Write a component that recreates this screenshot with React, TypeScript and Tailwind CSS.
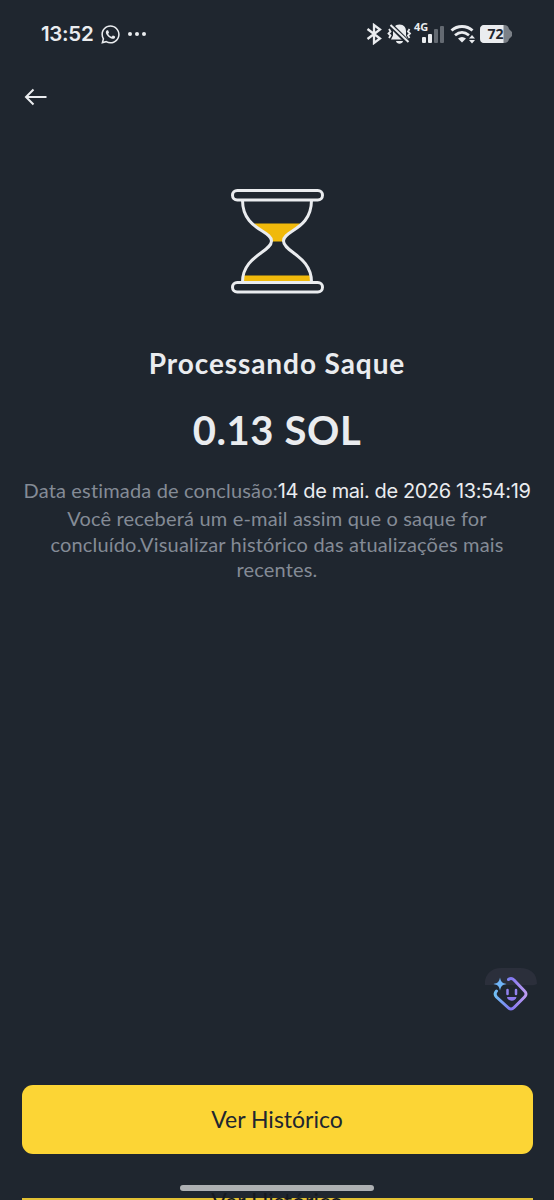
import React from "react";
import { FaWhatsapp } from "react-icons/fa";

const StatusBar: React.FC = () => {
  return (
    <header className="flex h-[68px] items-center justify-between pr-[41px] pl-[41px] text-[#eaecef]">
      <div className="flex items-center">
        <span className="w-[53px] font-['Inter',sans-serif] text-[20.500px] font-semibold tracking-[-0.300px] whitespace-nowrap">
          13:52
        </span>
        <FaWhatsapp className="ml-[6px] h-[21px] w-[21px]" />
        <div className="ml-[7px] flex gap-[3px]">
          <span className="h-[4px] w-[4px] rounded-full bg-[#eaecef]"></span>
          <span className="h-[4px] w-[4px] rounded-full bg-[#eaecef]"></span>
          <span className="h-[4px] w-[4px] rounded-full bg-[#eaecef]"></span>
        </div>
      </div>

      <div className="flex items-center">
        {/* bluetooth */}
        <svg width="17" height="22" viewBox="0 0 17 22" fill="none" stroke="currentColor" strokeWidth="2.300">
          <path d="M1.500 6 14 15.500 8 20V2l6 4.500L1.500 16" />
        </svg>
        {/* vibrate / muted */}
        <svg className="ml-[4px]" width="25" height="22" viewBox="0 0 25 22" fill="none">
          <path
            d="M12.500 1.500c-4.500 0-6.500 3-6.500 6.500v4.500L4 16.500h17l-2-4V8c0-3.500-2-6.500-6.500-6.500ZM9 18h7c-.5 3.500-6.500 3.500-7 0Z"
            fill="currentColor"
          />
          <path d="m3.500 2 17 17" stroke="#1f262f" strokeWidth="5" />
          <path d="m3.500 2 18 17" stroke="currentColor" strokeWidth="2" />
          <path
            d="m2 6 1.500 2.500-2 2 2 2L2 15M22.500 6 21 8.500l2 2-2 2 1.500 2.500"
            stroke="currentColor"
            strokeWidth="1.800"
          />
        </svg>
        {/* mobile signal */}
        <div className="relative ml-[10px] flex h-[17px] items-end gap-[2px]">
          <span className="absolute -top-[6px] -left-[8px] font-['Noto_Sans',sans-serif] text-[11px] leading-[13px] font-bold">
            4G
          </span>
          <span className="h-[6px] w-[4px] rounded-[1px] bg-[#eaecef]"></span>
          <span className="h-[9px] w-[4px] rounded-[1px] bg-[#eaecef]"></span>
          <span className="h-[14px] w-[4px] rounded-[1px] bg-[#646a72]"></span>
          <span className="h-[17px] w-[4px] rounded-[1px] bg-[#646a72]"></span>
        </div>
        {/* wifi */}
        <svg className="ml-[6px]" width="26" height="20" viewBox="0 0 26 20" fill="none">
          <path d="M1.500 6.500c6-5.300 15-5.300 21 0" stroke="currentColor" strokeWidth="3" />
          <path d="M5 11.300c4.500-3.800 9.500-3.800 14 0" stroke="currentColor" strokeWidth="2.800" />
          <path d="M8 14.500c2.500-2 5.500-2 8 0L12 18.500Z" fill="currentColor" />
          <path d="m19 14.500 3-3.500 3 3.500ZM19 16l3 3.500 3-3.500Z" fill="currentColor" />
        </svg>
        {/* battery */}
        <svg className="ml-[3px]" width="34" height="20" viewBox="0 0 34 20">
          <path d="M6 1h19c3 0 4.500 1.500 5 4l3 3v4l-3 3c-.5 2.500-2 4-5 4H6c-4 0-5-2-5-5V6c0-3 1-5 5-5Z" fill="#7b8087" />
          <path d="M6 1h18.500v18H6c-4 0-5-2-5-5V6c0-3 1-5 5-5Z" fill="#eaecef" />
          <text
            x="16.500"
            y="15"
            textAnchor="middle"
            fill="#1f262f"
            className="font-['Noto_Sans',sans-serif] text-[14px] font-bold"
          >
            72
          </text>
        </svg>
      </div>
    </header>
  );
};

const Hourglass: React.FC = () => {
  return (
    <svg width="94" height="106" viewBox="0 0 94 106" fill="none">
      <path d="M24 35.500h46c-4 6-14 9-17 17v1H42v-1c-3-8-13-11-18-17Z" fill="#f0b90b" />
      <path d="M14 87.500h66v6H14Z" fill="#f0b90b" />
      <path
        d="M12.500 12c0 30 29 30 29 41s-29 15-29 41M81.500 12c0 30-28 30-28 41s28 15 28 41"
        stroke="#eaecef"
        strokeWidth="3"
      />
      <rect x="2.500" y="2.500" width="90" height="9.500" rx="4.750" stroke="#eaecef" strokeWidth="3" />
      <rect x="2.500" y="94.500" width="90" height="9.500" rx="4.750" stroke="#eaecef" strokeWidth="3" />
    </svg>
  );
};

const AssistantButton: React.FC = () => {
  return (
    <button className="absolute top-[967px] left-[484px]" aria-label="Assistente">
      <svg width="54" height="46" viewBox="0 0 54 46" fill="none">
        <defs>
          <linearGradient id="assistant" x1="10" y1="28" x2="44" y2="28" gradientUnits="userSpaceOnUse">
            <stop stopColor="#6fc3f5" />
            <stop offset="0.500" stopColor="#8176f2" />
            <stop offset="1" stopColor="#c4a0f0" />
          </linearGradient>
        </defs>
        <path d="M1 18C0 8 7 1 17 1h19c10 0 17 5 17 16-3 2-8 1-12 1Z" fill="#2b2f3b" />
        <path
          d="M24.500 12.500c2-1.500 4-1 5.500.5l10.500 11c2 2 2 4 0 6L30 40.500c-2 2-4 2-6 0L12.500 30c-1.800-2-1.800-4 0-6"
          stroke="url(#assistant)"
          strokeWidth="3"
          strokeLinecap="round"
        />
        <path d="M16 10.500c1 4.500 2 5.500 6.500 6.500-4.500 1-5.500 2-6.500 6.500-1-4.500-2-5.500-6.500-6.500 4.500-1 5.500-2 6.500-6.500Z" fill="#70b5f8" />
        <path d="M23.500 23v4M32 23v4" stroke="#9282f0" strokeWidth="2.500" strokeLinecap="round" />
        <path d="M23 30h9.500c-1 5-8.500 5-9.500 0Z" fill="#8d7af0" />
      </svg>
    </button>
  );
};

export default function App() {
  return (
    <div className="relative flex h-[1200px] w-[554px] flex-col overflow-hidden bg-[#1f262f] font-['Lato',sans-serif]">
      <StatusBar />

      <nav className="flex h-[58px] items-center pl-[24px]">
        <button aria-label="Voltar">
          <svg width="24" height="18" viewBox="0 0 24 18" fill="none" stroke="#eaecef" strokeWidth="2">
            <path d="M9.500 1.500 2 9l7.500 7.500M2 9h20.500" />
          </svg>
        </button>
      </nav>

      <main className="flex flex-1 flex-col items-center pt-[62px] whitespace-nowrap">
        <Hourglass />
        <h1 className="mt-[51px] text-[28px] leading-[36px] font-bold tracking-[0.920px] text-[#eaecef]">
          Processando Saque
        </h1>
        <p className="mt-[25px] text-[40px] leading-[48px] font-bold tracking-[0.600px] text-[#eaecef]">
          0.13 SOL
        </p>
        <div className="mt-[24px] flex items-center text-[20px] leading-[26px] text-[#848b96]">
          <span className="relative -top-px tracking-[0.160px]">Data estimada de conclusão:</span>
          <span className="font-['Inter',sans-serif] tracking-[-0.400px] text-[#eaecef]">14 de mai. de 2026 13:54:19</span>
        </div>
        <div className="mt-[2px] text-center text-[20px] leading-[25.500px] tracking-[0.180px] text-[#848b96]">
          <p>Você receberá um e-mail assim que o saque for</p>
          <p>concluído.Visualizar histórico das atualizações mais</p>
          <p>recentes.</p>
        </div>
      </main>

      <footer className="flex h-[115px] shrink-0 flex-col items-center">
        <button className="h-[69px] w-[511px] shrink-0 rounded-[11px] bg-[#fcd535] text-[23px] text-[#202630]">
          Ver Histórico
        </button>
        <div className="mt-[31px] h-[6px] w-[194px] shrink-0 rounded-full bg-[#adb0b3]"></div>
        <div className="mt-[7px] h-[2px] w-[511px] shrink-0 bg-[#e2c034] text-center text-[23px] leading-[7px] text-[#15191f]">
          Ver Histórico
        </div>
      </footer>

      <AssistantButton />
    </div>
  );
}
